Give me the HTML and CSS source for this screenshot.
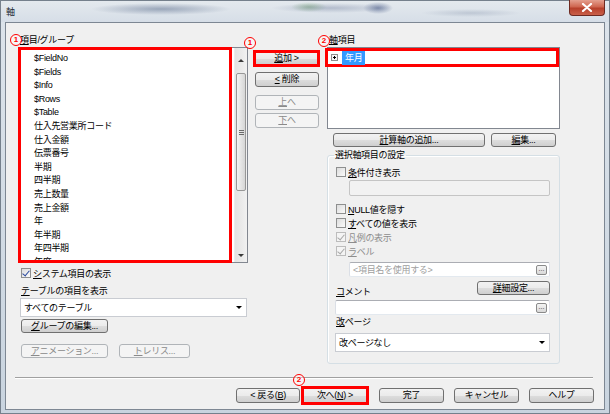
FILE: index.html
```html
<!DOCTYPE html>
<html>
<head>
    <title>軸</title>
    <link rel="stylesheet" href="styles.css">
</head>
<body>
<div class="window">
    <div class="titlebar">
        <span class="title">軸</span>
        <span class="close">
            <svg width="12" height="9" viewBox="0 0 12 9"><path d="M2 1 L10 8 M10 1 L2 8" stroke="#fff" stroke-width="2.2" stroke-linecap="round"/></svg>
        </span>
    </div>

    <div class="client">
        <div class="main">
            <!-- 左：項目一覧 -->
            <div class="col left">
                <div class="label head"><span class="mark m-left">1</span><u>項</u>目/グループ</div>
                <div class="listbox">
                    <ul class="items">
                        <li>$FieldNo</li>
                        <li>$Fields</li>
                        <li>$Info</li>
                        <li>$Rows</li>
                        <li>$Table</li>
                        <li>仕入先営業所コード</li>
                        <li>仕入金額</li>
                        <li>伝票番号</li>
                        <li>半期</li>
                        <li>四半期</li>
                        <li>売上数量</li>
                        <li>売上金額</li>
                        <li>年</li>
                        <li>年半期</li>
                        <li>年四半期</li>
                        <li>年度</li>
                    </ul>
                    <div class="vscroll">
                        <div class="arrow"><span class="tri up"></span></div>
                        <div class="track"><div class="thumb"><span class="grip"></span></div></div>
                        <div class="arrow"><span class="tri down"></span></div>
                    </div>
                </div>
                <div class="check sys"><span class="box on"></span><span><u>シ</u>ステム項目の表示</span></div>
                <div class="label tbl"><u>テ</u>ーブルの項目を表示</div>
                <div class="combo tblcombo"><span>すべてのテーブル</span><span class="drop"></span></div>
                <button class="btn grp"><u>グ</u>ループの編集...</button>
                <div class="btnrow extra">
                    <button class="btn dis anim"><u>ア</u>ニメーション...</button>
                    <button class="btn dis trellis"><u>ト</u>レリス...</button>
                </div>
            </div>

            <!-- 中央：追加・削除 -->
            <div class="col mid">
                <span class="mark m-mid">1</span>
                <button class="btn hl add"><u>追</u>加&nbsp;&gt;</button>
                <button class="btn small del"><u>&lt;</u>&nbsp;削除</button>
                <button class="btn small dis up"><u>上</u>へ</button>
                <button class="btn small dis down"><u>下</u>へ</button>
            </div>

            <!-- 右：軸項目 -->
            <div class="col right">
                <div class="label head axishead"><span class="mark m-right">2</span><u>軸</u>項目</div>
                <div class="axislist">
                    <div class="axisrow"><span class="plus"></span><span class="sel">年月</span></div>
                </div>
                <div class="btnrow axisbtns">
                    <button class="btn calc"><u>計</u>算軸の追加...</button>
                    <button class="btn edit"><u>編</u>集...</button>
                </div>
                <fieldset class="group">
                    <legend>選択軸項目の設定</legend>
                    <div class="check cond"><span class="box"></span><span><u>条</u>件付き表示</span></div>
                    <div class="field dis indent"></div>
                    <div class="check nullrow"><span class="box"></span><span><u>N</u>ULL値を隠す</span></div>
                    <div class="check"><span class="box"></span><span><u>す</u>べての値を表示</span></div>
                    <div class="check off"><span class="box on"></span><span><u>凡</u>例の表示</span></div>
                    <div class="check off"><span class="box on"></span><span><u>ラ</u>ベル</span></div>
                    <div class="field indent name"><span class="hint">&lt;項目名を使用する&gt;</span><span class="dots">...</span></div>
                    <div class="comment-row">
                        <span class="label clabel"><u>コ</u>メント</span>
                        <button class="btn detail"><u>詳</u>細設定...</button>
                    </div>
                    <div class="field wide"><span></span><span class="dots">...</span></div>
                    <div class="label plabel"><u>改</u>ページ</div>
                    <div class="combo pcombo"><span>改ページなし</span><span class="drop"></span></div>
                </fieldset>
            </div>
        </div>

        <div class="separator"></div>

        <div class="footer">
            <button class="btn foot back">&lt;&nbsp;戻る(<u>B</u>)</button>
            <div class="nextwrap">
                <span class="mark m-next">2</span>
                <button class="btn foot hl next">次へ(<u>N</u>)&nbsp;&gt;</button>
            </div>
            <button class="btn foot">完了</button>
            <button class="btn foot">キャンセル</button>
            <button class="btn foot">ヘルプ</button>
        </div>
    </div>
</div>
</body>
</html>
```

FILE: styles.css
```css
* {
    box-sizing: border-box;
}
body {
    margin: 0;
    font-family: "Liberation Sans", "Noto Sans CJK JP", sans-serif;
    font-size: 9px;
    letter-spacing: -0.3px;
    color: #000;
    background: #fff;
}
u {
    text-decoration: underline;
    text-underline-offset: 1px;
}

/* ウィンドウ枠 */
.window {
    width: 610px;
    height: 414px;
    display: flex;
    flex-direction: column;
    border: 1px solid #75808c;
    background: linear-gradient(#dde4eb, #c9d4df);
}
.titlebar {
    height: 21px;
    display: flex;
    align-items: flex-start;
    background:
        radial-gradient(ellipse 70px 6px at 160px 8px, rgba(70, 90, 125, .45), transparent),
        radial-gradient(ellipse 60px 5px at 330px 7px, rgba(95, 110, 145, .35), transparent),
        radial-gradient(ellipse 18px 5px at 308px 6px, rgba(95, 150, 90, .45), transparent),
        radial-gradient(ellipse 15px 6px at 377px 7px, rgba(50, 70, 120, .55), transparent),
        radial-gradient(ellipse 50px 4px at 470px 12px, rgba(120, 135, 160, .3), transparent),
        linear-gradient(#e4e9ee, #d6dee7);
}
.title {
    margin: 5px 0 0 5px;
    font-size: 9px;
    line-height: 12px;
    color: #1e2a36;
}
.close {
    margin: -1px 4px 0 auto;
    width: 36px;
    height: 16px;
    display: flex;
    align-items: center;
    justify-content: center;
    border: 1px solid #6e2a22;
    border-top: none;
    border-radius: 0 0 4px 4px;
    background: linear-gradient(#e4a08f, #cf6650 45%, #b7402b 55%, #c9604a);
}

.client {
    flex: 1;
    margin: 0 4px 3px 4px;
    padding: 10px 10px 0 12px;
    border: 1px solid #7d8793;
    background: #f0f0f0;
    display: flex;
    flex-direction: column;
}
.main {
    display: flex;
    align-items: flex-start;
}
.col {
    display: flex;
    flex-direction: column;
    position: relative;
}
.label {
    line-height: 14px;
    white-space: nowrap;
}
.head {
    position: relative;
    padding-left: 2px;
}

/* 注記の丸数字 */
.mark {
    position: absolute;
    width: 12px;
    height: 12px;
    border: 1.5px solid #f00;
    border-radius: 50%;
    color: #f00;
    font-weight: bold;
    font-size: 8px;
    line-height: 9px;
    letter-spacing: 0;
    text-align: center;
    background: rgba(255, 255, 255, .4);
}
.m-left { left: -8px; top: 1px; }
.m-mid { left: -9px; top: 4px; }
.m-right { left: -9px; top: 2px; }
.m-next { left: -8px; top: -12px; }

/* ボタン */
.btn {
    font: inherit;
    letter-spacing: inherit;
    color: #000;
    height: 15px;
    padding: 0;
    display: flex;
    align-items: center;
    justify-content: center;
    border: 1px solid #707070;
    border-radius: 3px;
    background: linear-gradient(#f2f2f2 0%, #ebebeb 50%, #dddddd 51%, #cfcfcf 100%);
    line-height: 1;
    white-space: nowrap;
}
.btn.dis {
    border-color: #b0b4b8;
    background: #f4f4f4;
    color: #8a8a8a;
}
.btn.hl {
    border: 3px solid #f00;
    border-radius: 0;
}

/* 左列 */
.left {
    width: 230px;
}
.listbox {
    height: 216px;
    display: flex;
    border: 1px solid #828790;
    background: #fff;
}
.items {
    list-style: none;
    margin: -1px 0 -1px -1px;
    padding: 2px 0 0 0;
    width: 214px;
    border: 3px solid #f00;
    overflow: hidden;
}
.items li {
    padding-left: 13px;
    line-height: 13.6px;
    white-space: nowrap;
}
.vscroll {
    width: 13px;
    margin-left: auto;
    display: flex;
    flex-direction: column;
    background: linear-gradient(90deg, #e3e3e3, #f1f1f1);
    border-left: 1px solid #ececec;
}
.arrow {
    height: 16px;
    display: flex;
    align-items: center;
    justify-content: center;
}
.tri {
    width: 0;
    height: 0;
    border-left: 3px solid transparent;
    border-right: 3px solid transparent;
}
.tri.up { border-bottom: 3px solid #3a3a3a; }
.tri.down { border-top: 3px solid #3a3a3a; }
.track {
    flex: 1;
}
.thumb {
    margin: 9px 1px 0 1px;
    height: 118px;
    border: 1px solid #979797;
    border-radius: 2px;
    background: linear-gradient(90deg, #f4f4f4, #e2e2e2 60%, #d6d6d6);
    display: flex;
    align-items: center;
    justify-content: center;
}
.grip {
    width: 5px;
    height: 5px;
    background: repeating-linear-gradient(#6b6b6b 0 1px, transparent 1px 2px);
}

.check {
    display: flex;
    align-items: center;
    height: 14px;
    gap: 2px;
    white-space: nowrap;
}
.box {
    width: 10px;
    height: 10px;
    border: 1px solid #8e8f8f;
    background: linear-gradient(135deg, #dcdcdc, #fafafa);
    position: relative;
}
.box.on::after {
    content: "";
    position: absolute;
    left: 2px;
    top: 0px;
    width: 3px;
    height: 6px;
    border-right: 1.5px solid #2a4a9e;
    border-bottom: 1.5px solid #2a4a9e;
    transform: rotate(40deg);
}
.check.off {
    color: #8d8d8d;
}
.check.off .box {
    border-color: #bcbcbc;
    background: #f4f4f4;
}
.check.off .box.on::after {
    border-color: #a8a8a8;
}
.sys {
    margin: 3px 0 0 3px;
}
.tbl {
    margin-top: 5px;
    padding-left: 3px;
    line-height: 13px;
}
.combo {
    height: 19px;
    display: flex;
    align-items: center;
    justify-content: space-between;
    padding: 0 4px 0 3px;
    border: 1px solid #c9ccd2;
    background: #fff;
}
.drop {
    width: 0;
    height: 0;
    border-left: 3px solid transparent;
    border-right: 3px solid transparent;
    border-top: 3px solid #000;
}
.tblcombo {
    margin-left: 2px;
    width: 227px;
}
.grp {
    margin: 2px 0 0 3px;
    width: 87px;
    height: 14px;
}
.btnrow {
    display: flex;
}
.extra {
    margin: 11px 0 0 3px;
    gap: 11px;
}
.anim {
    width: 87px;
    height: 14px;
}
.trellis {
    width: 71px;
    height: 14px;
}

/* 中央列 */
.mid {
    width: 67px;
    margin-left: 5px;
    padding-top: 17px;
}
.add {
    width: 67px;
    height: 17px;
}
.small {
    width: 64px;
    margin-left: 2px;
}
.del { margin-top: 5px; }
.up { margin-top: 8px; }
.down { margin-top: 3px; }

/* 右列 */
.right {
    width: 233px;
    margin-left: 7px;
}
.axislist {
    height: 82px;
    border: 1px solid #828790;
    background: #fff;
}
.axisrow {
    height: 19px;
    margin-left: -3px;
    border: 3px solid #f00;
    display: flex;
    align-items: center;
}
.plus {
    width: 7px;
    height: 7px;
    margin-left: 3px;
    border: 1px solid #8f8f8f;
    background:
        linear-gradient(#000, #000) center / 3px 1px no-repeat,
        linear-gradient(#000, #000) center / 1px 3px no-repeat,
        #f6f6f6;
}
.sel {
    margin-left: 4px;
    padding: 0 3px;
    height: 14px;
    line-height: 14px;
    background: #3399ff;
    color: #fff;
}
.axisbtns {
    margin: 4px 0 0 6px;
    gap: 6px;
}
.calc {
    width: 152px;
    height: 14px;
}
.edit {
    width: 65px;
    height: 14px;
}

.group {
    margin: 1px 0 0 0;
    padding: 0 9px 11px 8px;
    border: 1px solid #d5dfe5;
    border-radius: 3px;
    box-shadow: inset 1px 1px 0 #fff;
    display: flex;
    flex-direction: column;
    min-width: 0;
}
.group legend {
    padding: 0 1px;
    margin-left: -2px;
    line-height: 14px;
}
.cond {
    margin-top: 3px;
}
.field {
    height: 15px;
    display: flex;
    align-items: center;
    justify-content: space-between;
    padding: 0 2px 0 3px;
    border: 1px solid #abadb3;
    border-color: #abadb3 #e2e3ea #e3e9ef #dbdfe6;
    border-radius: 2px;
    background: #fff;
}
.field.dis {
    background: #f2f2f2;
    border-color: #c5c5c5;
}
.indent {
    margin-left: 13px;
    width: 201px;
}
.cond + .field {
    margin-top: 1px;
    height: 16px;
}
.nullrow {
    margin-top: 6px;
}
.name {
    margin-top: 4px;
}
.hint {
    color: #a0a0a0;
}
.dots {
    width: 11px;
    height: 10px;
    border: 1px solid #8a8a8a;
    border-radius: 2px;
    background: linear-gradient(#f4f4f4, #d8d8d8);
    font-size: 7px;
    line-height: 5px;
    letter-spacing: 0;
    text-align: center;
    color: #333;
}
.comment-row {
    height: 18px;
    margin-top: 4px;
    display: flex;
    justify-content: space-between;
}
.clabel {
    align-self: flex-end;
    line-height: 13px;
}
.detail {
    width: 73px;
    height: 14px;
}
.wide {
    margin: 1px 0 0 -1px;
    width: 215px;
}
.plabel {
    line-height: 14px;
}
.pcombo {
    margin: 4px 0 0 -1px;
    width: 215px;
    height: 19px;
}

/* 下部 */
.separator {
    margin: 13px 1px 0 -3px;
    border-top: 1px solid #a0a0a0;
    border-bottom: 1px solid #fff;
}
.footer {
    margin-top: 7px;
    display: flex;
    align-items: center;
    justify-content: flex-end;
    gap: 10px;
}
.foot {
    width: 65px;
    height: 15px;
}
.back {
    width: 64px;
    margin-right: -9px;
}
.nextwrap {
    position: relative;
}
.next {
    width: 68px;
    height: 19px;
}
```
